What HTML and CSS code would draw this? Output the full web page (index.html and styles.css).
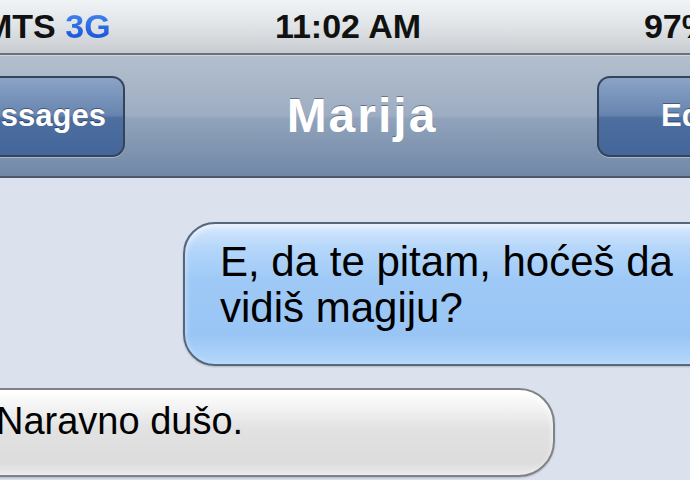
FILE: index.html
```html
<!DOCTYPE html>
<html lang="en">
<head>
    <meta charset="UTF-8">
    <meta name="viewport" content="width=device-width, initial-scale=1.0">
    <title>Marija</title>
    <link rel="stylesheet" href="styles.css">
</head>
<body>
<div class="screen">
    <!-- status bar -->
    <div class="status">
        <div class="carrier">MTS <span class="net">3G</span></div>
        <div class="clock">11:02 AM</div>
        <div class="battery">97%</div>
    </div>

    <!-- navigation -->
    <div class="nav">
        <div class="nav-btn back">Messages</div>
        <div class="nav-title">Marija</div>
        <div class="nav-btn edit">Edit</div>
    </div>

    <!-- conversation -->
    <div class="thread">
        <div class="bubble sent">E, da te pitam, hoćeš da vidiš magiju?</div>
        <div class="bubble received">Naravno dušo.</div>
    </div>
</div>
</body>
</html>
```

FILE: styles.css
```css
html, body {
    margin: 0;
    padding: 0;
    overflow: hidden;
    background-color: #dbe2ed;
}
body {
    width: 690px;
    height: 480px;
    font-family: "Liberation Sans", Arial, sans-serif;
}
.screen {
    width: 760px;
    margin-left: -30px;
}

.status {
    display: grid;
    grid-template-columns: 1fr auto 1fr;
    align-items: center;
    height: 53px;
    padding: 0 18px 0 14px;
    background: linear-gradient(#f1f4f6, #dfe3e6 50%, #c8ccd0);
    border-bottom: 2px solid #6e7277;
    font-size: 34px;
    font-weight: bold;
    color: #111;
}
.net {
    color: #1f62e0;
    background: linear-gradient(#4a8ff0, #1148d8);
    -webkit-background-clip: text;
    background-clip: text;
    -webkit-text-fill-color: transparent;
}
.battery {
    text-align: right;
}

.nav {
    display: flex;
    align-items: center;
    height: 120px;
    background: linear-gradient(#b3bfce, #9dadc2 50%, #91a3bb 52%, #7088a8);
    border-top: 1px solid #cdd5df;
    border-bottom: 2px solid #4c5869;
}
.nav-btn {
    box-sizing: border-box;
    height: 81px;
    display: flex;
    align-items: center;
    border: 2px solid #34445c;
    border-radius: 13px;
    background: linear-gradient(#8ba3c6, #6785b0 48%, #4d6e9f 52%, #45669a);
    box-shadow: 0 1px 0 rgba(255, 255, 255, 0.35);
    color: #fff;
    font-size: 31px;
    font-weight: bold;
    text-shadow: 0 -1px 0 rgba(0, 0, 0, 0.4);
}
.back {
    width: 155px;
    justify-content: flex-end;
    padding-right: 17px;
    border-left: none;
    border-radius: 0 13px 13px 0;
}
.edit {
    width: 133px;
    padding-left: 62px;
    border-right: none;
    border-radius: 13px 0 0 13px;
}
.nav-title {
    flex: 1;
    text-align: center;
    color: #fff;
    font-size: 48px;
    font-weight: bold;
    letter-spacing: 2px;
    text-indent: 2px;
    text-shadow: 0 -1px 0 rgba(0, 0, 0, 0.35);
    padding-bottom: 2px;
}

.thread {
    display: flex;
    flex-direction: column;
    padding-top: 44px;
    gap: 22px;
}
.bubble {
    line-height: 46px;
    color: #000;
}
.sent {
    margin-left: 213px;
    margin-right: -30px;
    padding: 15px 20px 33px 35px;
    font-size: 42px;
    border: 2px solid #55667d;
    border-radius: 32px;
    background: linear-gradient(#d6e8fc, #b4d6fa 18%, #9ec9f6 40%, #99c5f5 80%, #b5d8fb);
    box-shadow: inset 0 3px 6px rgba(255, 255, 255, 0.6), 0 1px 2px rgba(0, 0, 0, 0.2);
}
.received {
    margin-left: -30px;
    width: 615px;
    box-sizing: border-box;
    padding: 9px 20px 31px 54px;
    font-size: 38px;
    line-height: 45px;
    border: 2px solid #7f8287;
    border-radius: 36px;
    background: linear-gradient(#ffffff, #f2f2f2 22%, #e2e2e2 45%, #dcdcdc 85%, #ececec);
    box-shadow: inset 0 3px 6px rgba(255, 255, 255, 0.8), 0 1px 2px rgba(0, 0, 0, 0.2);
}
```
